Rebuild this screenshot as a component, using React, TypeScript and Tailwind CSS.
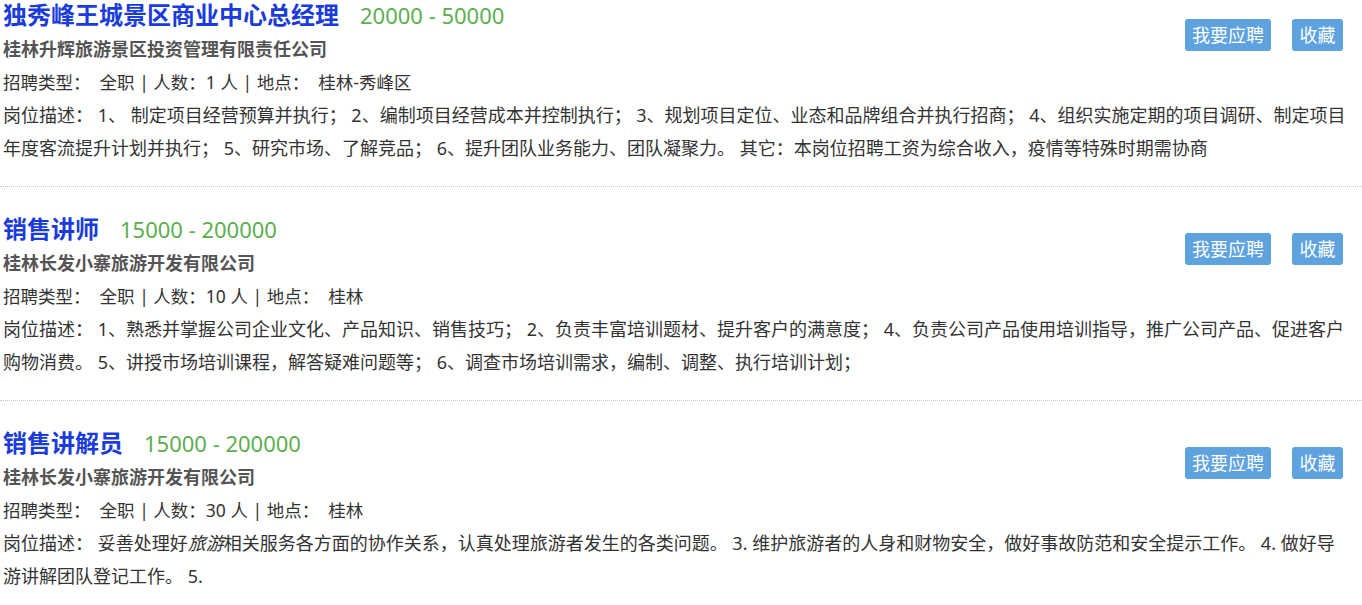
const jobs = [
  {
    title: '独秀峰王城景区商业中心总经理',
    salary: '20000 - 50000',
    company: '桂林升辉旅游景区投资管理有限责任公司',
    count: '1',
    place: '桂林-秀峰区',
    desc: (
      <>
        1、 制定项目经营预算并执行； 2、编制项目经营成本并控制执行； 3、规划项目定位、业态和品牌组合并执行招商； 4、组织实施定期的项目调研、制定项目年度客流提升计划并执行； 5、研究市场、了解竞品； 6、提升团队业务能力、团队凝聚力。 其它：本岗位招聘工资为综合收入，疫情等特殊时期需协商
      </>
    ),
  },
  {
    title: '销售讲师',
    salary: '15000 - 200000',
    company: '桂林长发小寨旅游开发有限公司',
    count: '10',
    place: '桂林',
    desc: (
      <>
        1、熟悉并掌握公司企业文化、产品知识、销售技巧； 2、负责丰富培训题材、提升客户的满意度； 4、负责公司产品使用培训指导，推广公司产品、促进客户购物消费。 5、讲授市场培训课程，解答疑难问题等； 6、调查市场培训需求，编制、调整、执行培训计划；
      </>
    ),
  },
  {
    title: '销售讲解员',
    salary: '15000 - 200000',
    company: '桂林长发小寨旅游开发有限公司',
    count: '30',
    place: '桂林',
    desc: (
      <>
        妥善处理好<i>旅游</i>相关服务各方面的协作关系，认真处理旅游者发生的各类问题。 3. 维护旅游者的人身和财物安全，做好事故防范和安全提示工作。 4. 做好导游讲解团队登记工作。 5.
      </>
    ),
  },
];

export default function App() {
  return (
    <div
      className="w-[1362px] h-[605px] overflow-hidden bg-white text-[#333]"
      style={{ fontFamily: '"Noto Sans", "Noto Sans CJK SC", sans-serif' }}
    >
      <div className="-mt-[2px]">
        {jobs.map((job, i) => (
          <div
            key={i}
            className={`pl-[3px] pb-[21px] border-b border-dotted border-[#c8c8c8] ${i === 0 ? '' : 'pt-[25px]'}`}
          >
            {/* header */}
            <div className="flex justify-between">
              <div>
                <div className="flex items-baseline h-[34px] leading-[34px]">
                  <span className="text-[24px] font-bold text-[#1a3cdc]">{job.title}</span>
                  <span className="ml-[21px] text-[22px] text-[#5cae4f]">{job.salary}</span>
                </div>
                <div className="text-[18px] leading-[34px] font-bold text-[#555]">{job.company}</div>
              </div>
              <div className="flex gap-[21px] mt-[21px] mr-[19px] self-start">
                <button className="h-[32px] w-[86px] rounded-[3px] bg-[#5ea2e0] text-white text-[18px]">
                  我要应聘
                </button>
                <button className="h-[32px] w-[51px] rounded-[3px] bg-[#5ea2e0] text-white text-[18px]">
                  收藏
                </button>
              </div>
            </div>
            <div className="text-[17.5px] leading-[33px] whitespace-pre">
              {`招聘类型：  全职 | 人数：${job.count} 人 | 地点：  ${job.place}`}
            </div>
            <p className="text-[18px] leading-[33px] pr-[11px]">
              岗位描述： {job.desc}
            </p>
          </div>
        ))}
      </div>
    </div>
  );
}
